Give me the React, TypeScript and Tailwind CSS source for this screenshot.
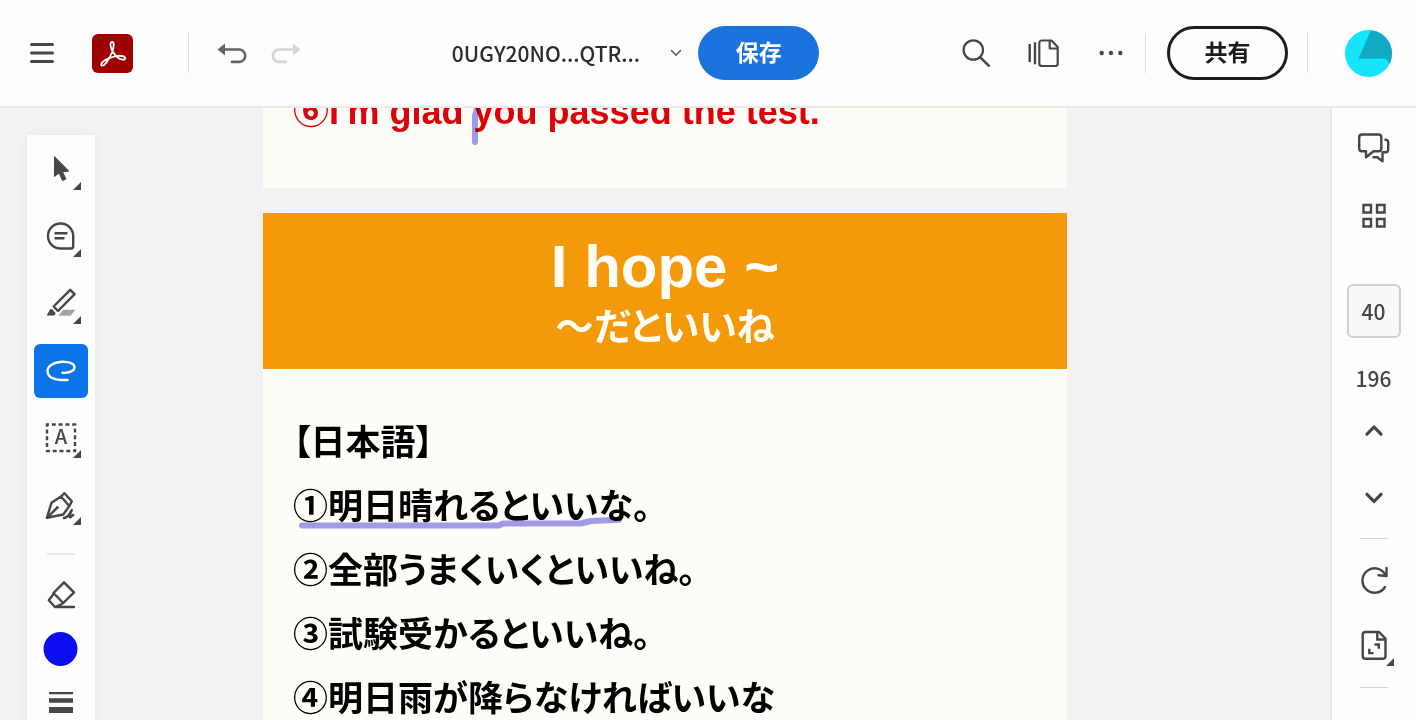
import React from 'react';

const ink = '#464646';

interface ToolButtonProps {
  label: string;
  active?: boolean;
  more?: boolean;
  children: React.ReactNode;
}

const ToolButton: React.FC<ToolButtonProps> = ({ label, active, more, children }) => (
  <button
    type="button"
    aria-label={label}
    className={`relative size-[54px] shrink-0 rounded-md ${active ? 'bg-[#0b75e8] text-white' : 'text-[#464646]'}`}
  >
    <svg
      viewBox="0 0 54 54"
      className="size-full"
      fill="none"
      stroke="currentColor"
      strokeWidth="2.4"
      strokeLinecap="round"
      strokeLinejoin="round"
    >
      {children}
    </svg>
    {more && (
      <svg viewBox="0 0 8 8" className="absolute right-[7px] bottom-[7px] size-2" fill="currentColor">
        <path d="M8 0v8H0z" />
      </svg>
    )}
  </button>
);

const Header: React.FC = () => (
  <header className="flex h-[108px] shrink-0 items-center justify-between border-b-2 border-[#e9e9e9] bg-[#fdfdfd] pr-6 pl-[30px]">
    <div className="flex items-center">
      <button type="button" aria-label="メニュー">
        <svg viewBox="0 0 24 24" className="size-6" stroke={ink} strokeWidth="3" strokeLinecap="round">
          <path d="M1.5 3.5h21M1.5 12h21M1.5 20.5h21" />
        </svg>
      </button>
      <a href="#" aria-label="Acrobat" className="ml-[38px] block h-[39px] w-[41px] rounded-md bg-[#9f0000]">
        <svg viewBox="0 0 122 117" className="size-full" fill="none" stroke="#fff" strokeWidth="5.5">
          <path d="M60 24C52 24 54 40 62 53C70 66 82 76 92 77C102 78 101 66 88 66C72 65 52 71 38 79C26 86 24 95 31 95C40 95 54 68 60 54C65 40 67 24 60 24Z" />
        </svg>
      </a>
      <div className="ml-[55px] h-10 w-px bg-[#dcdcdc]" />
      <button type="button" aria-label="元に戻す" className="ml-7">
        <svg viewBox="0 0 30 24" className="h-6 w-[30px]" fill="none" stroke="#646464" strokeWidth="2.6" strokeLinecap="round">
          <path d="M7 8.500H22a6.200 6.200 0 0 1 0 12.400H15" />
          <path d="M.5 8.500l7.500-6v12z" fill="#646464" stroke="none" />
        </svg>
      </button>
      <button type="button" aria-label="やり直し" className="mr-2 ml-6" disabled>
        <svg viewBox="0 0 30 24" className="h-6 w-[30px]" fill="none" stroke="#d4d4d4" strokeWidth="2.6" strokeLinecap="round">
          <path d="M23 8.500H8a6.200 6.200 0 0 0 0 12.400H15" />
          <path d="M29.500 8.500l-7.500-6v12z" fill="#d4d4d4" stroke="none" />
        </svg>
      </button>
    </div>

    <div className="flex items-center">
      <button type="button" className="flex items-center text-[21px] leading-8 font-medium text-[#2c2c2c]">
        <span>0UGY20NO...QTR...</span>
        <svg viewBox="0 0 12 8" className="ml-[30px] h-2 w-3" fill="none" stroke="#555" strokeWidth="1.6" strokeLinecap="round">
          <path d="M1.500 1.500L6 6.200l4.500-4.700" />
        </svg>
      </button>
      <button
        type="button"
        className="ml-4 h-[54px] w-[121px] rounded-full bg-[#1b73de] pb-1 text-[23px] leading-8 font-bold text-white"
      >
        保存
      </button>
    </div>

    <div className="flex items-center">
      <button type="button" aria-label="検索">
        <svg viewBox="0 0 28 28" className="size-7" fill="none" stroke={ink} strokeWidth="2.2" strokeLinecap="round">
          <circle cx="11.300" cy="11" r="9.700" />
          <path d="M18.300 18.300l8.400 8.400" strokeWidth="2.600" />
        </svg>
      </button>
      <button type="button" aria-label="ページ表示" className="ml-[38px]">
        <svg viewBox="0 0 31 28" className="h-7 w-[31px]" fill="none" stroke={ink} strokeWidth="2.2" strokeLinejoin="round">
          <path d="M1.700 5v18M7 3.300v22" strokeWidth="2.400" />
          <path d="M13.800 1.500H23.500l6.200 6.500V24.500a2.500 2.500 0 0 1-2.500 2.500H13.800a2.500 2.500 0 0 1-2.500-2.500V4a2.500 2.500 0 0 1 2.500-2.500z" />
          <path d="M21.700 1.500V9.500h8" />
        </svg>
      </button>
      <button type="button" aria-label="その他" className="ml-10">
        <svg viewBox="0 0 24 24" className="size-6" fill={ink}>
          <circle cx="2.700" cy="12" r="2.200" />
          <circle cx="12" cy="12" r="2.200" />
          <circle cx="21.300" cy="12" r="2.200" />
        </svg>
      </button>
      <div className="ml-[22px] h-10 w-px bg-[#dcdcdc]" />
      <button
        type="button"
        className="ml-[21px] h-[54px] w-[121px] rounded-full border-3 border-[#1c1c1c] pb-1 text-[23px] leading-8 font-bold text-[#1c1c1c]"
      >
        共有
      </button>
      <div className="ml-[19px] h-10 w-px bg-[#dcdcdc]" />
      <button type="button" aria-label="アカウント" className="ml-[37px] size-[47px] overflow-hidden rounded-full bg-[#16e4fb]">
        <svg viewBox="0 0 47 47" className="size-full" fill="#10abc1">
          <path d="M26 0L13.300 28.700H41L45 34L47 36V0z" />
        </svg>
      </button>
    </div>
  </header>
);

const Toolbar: React.FC = () => (
  <nav aria-label="ツール" className="mt-[27px] ml-[27px] flex w-[68px] flex-col items-center gap-[13px] bg-[#fdfdfd] pt-2 shadow-[0_0_8px_rgba(0,0,0,0.06)]">
    <ToolButton label="選択" more>
      <path
        d="M20.500 14v19.500l4.600-3.600L28.500 37.500l3.400-1.500-3.400-7.300 6-.6z"
        fill="currentColor"
        strokeWidth="1"
      />
    </ToolButton>
    <ToolButton label="コメント" more>
      <path d="M26.500 13.500a12.500 12.500 0 1 0 0 25H37a2.200 2.200 0 0 0 2.200-2.200V26A12.500 12.500 0 0 0 26.500 13.500z" />
      <path d="M21.500 23.300h11M21.500 28.200h8" />
    </ToolButton>
    <ToolButton label="ハイライト" more>
      <path d="M29.300 32.700h12l-4.600 6H24.300z" fill="#a3a3a3" stroke="none" />
      <path d="M36.200 12.800l4.400 4.400L24 34l-4.400-4.500z" />
      <path d="M12.700 38.500L16 32.300h2.500l3.200 4-1.500 2.200z" fill="currentColor" stroke="none" />
    </ToolButton>
    <ToolButton label="手書き" active>
      <path d="M28.500 28.700C34 29.500 40.500 27 40.500 23.500C40.500 19.500 35 17.700 29 17.700C20 17.700 13.500 22 13.500 27C13.500 33 20 36 27 36H33.500" />
    </ToolButton>
    <ToolButton label="テキスト" more>
      <path
        d="M13 13.500h28v26.500H13z"
        strokeDasharray="4 2.800"
        strokeDashoffset="2"
        strokeLinecap="butt"
        strokeLinejoin="miter"
      />
      <text x="27" y="33" textAnchor="middle" fontSize="20" fontWeight="500" fill="currentColor" stroke="none">
        A
      </text>
    </ToolButton>
    <ToolButton label="署名" more>
      <path d="M12.900 39.800L17.500 24.700L27 18.500L35.300 28L29.300 36.500z" />
      <path d="M27 18.500l3.500-3.300 7.300 8.200-2.500 4.600M13 39.800l10-10" />
      <circle cx="23.300" cy="29.500" r="1.500" fill="currentColor" stroke="none" />
      <path d="M30 40c4-.5 5.500-4 7.800-8-1.500 4-3.500 7-1.600 7.200 1.500.1 1.500-2 3-2.200" />
    </ToolButton>
    <div className="mt-2 h-0.5 w-7 bg-[#e6e6e6]" />
    <div className="flex flex-col">
      <ToolButton label="消しゴム">
        <path d="M30 14.300l10 10L29.300 35 19.500 25z" />
        <path d="M19.500 26l-4.700 6.300L21 39l7-3M21 39h19" />
      </ToolButton>
      <ToolButton label="色">
        <circle cx="26.500" cy="27" r="17" fill="#0c0cf0" stroke="none" />
      </ToolButton>
      <ToolButton label="太さ">
        <path d="M15 16h24v2.200H15zM15 22.300h24v4.400H15zM15 31h24v6H15z" fill="currentColor" stroke="none" />
      </ToolButton>
    </div>
  </nav>
);

const sentences = [
  '【日本語】',
  '①明日晴れるといいな。',
  '②全部うまくいくといいね。',
  '③試験受かるといいね。',
  '④明日雨が降らなければいいな',
];

const Pages: React.FC = () => (
  <main className="w-full max-w-[804px] font-['Liberation_Sans','Noto_Sans_CJK_JP',sans-serif] font-bold">
    {/* tail of the previous page */}
    <section className="relative -mt-7 bg-[#fdfcf6] pr-8 pb-11 pl-[30px] text-4xl/16 text-[#dc0208]">
      <p>⑥I'm glad you passed the test.</p>
      <svg viewBox="0 0 8 40" className="absolute top-[26px] left-[208px] h-10 w-2 mix-blend-multiply" fill="none" stroke="#a19df0" strokeWidth="6" strokeLinecap="round">
        <path d="M6 2L4 10V36" />
      </svg>
    </section>

    <section className="mt-[25px] bg-[#fdfcf6]">
      <div className="flex h-[156px] flex-col items-center bg-[#f4990a] pt-5 text-[#fffdf5]">
        <h1 className="text-6xl/17">I hope ~</h1>
        <p className="text-[38px] leading-13 [font-feature-settings:'palt']">～だといいね</p>
      </div>
      <div className="relative pt-[42px] pr-8 pl-[30px] text-[35px] leading-16 text-black">
        {sentences.map((text) => (
          <p key={text} className="whitespace-nowrap [font-feature-settings:'palt']">
            {text}
          </p>
        ))}
        <svg viewBox="0 0 326 12" className="absolute top-[148px] left-9 h-3 w-[326px] mix-blend-multiply" fill="none" stroke="#a19df0" strokeWidth="6" strokeLinecap="round" strokeLinejoin="round">
          <path d="M3 8.500H200L204 6.500H282L292 4L320 2.800" />
        </svg>
      </div>
    </section>
  </main>
);

const SidePanel: React.FC = () => (
  <aside className="flex w-[86px] shrink-0 flex-col items-center gap-3 border-l-2 border-[#e9e9e9] bg-[#fdfdfd] pt-3.5 pr-px text-[#464646]">
    <ToolButton label="コメント一覧">
      <path d="M15 12.500h16.500a2.800 2.800 0 0 1 2.800 2.800v11.200a2.800 2.800 0 0 1-2.800 2.800H26.500l-7.500 6v-6h-4a2.800 2.800 0 0 1-2.800-2.800V15.300a2.800 2.800 0 0 1 2.800-2.800z" />
      <path d="M38.500 17.800c1.800 0 2.700.8 2.700 2.400v7.300c0 1.800-1 2.700-2.700 2.700h-3v9l-5.200-4h-3.800" />
    </ToolButton>
    <ToolButton label="サムネール">
      <path d="M16.500 17h7.500v7.500h-7.500zM30 17h7.500v7.500H30zM16.500 31h7.500v7.500h-7.500zM30 31h7.500v7.500H30z" strokeLinejoin="miter" />
    </ToolButton>
    <input
      type="text"
      aria-label="ページ番号"
      defaultValue="40"
      className="mt-[30px] size-[54px] shrink-0 rounded-md border-2 border-[#d0d0d0] bg-[#f8f8f8] text-center text-[21px] font-medium"
    />
    <span className="mt-3.5 text-[21px] leading-7 font-medium">196</span>
    <ToolButton label="前のページ">
      <path d="M20 30.200l7-7.200 7 7.200" strokeWidth="3.200" />
    </ToolButton>
    <ToolButton label="次のページ">
      <path d="M20 24.300l7 7.200 7-7.200" strokeWidth="3.200" />
    </ToolButton>
    <div className="my-0.5 h-px w-7 shrink-0 bg-[#d4d4d4]" />
    <ToolButton label="回転">
      <path d="M38 34A12.200 12.200 0 1 1 38.500 22" />
      <path d="M39.500 15v8l-8-.8" />
    </ToolButton>
    <ToolButton label="ページに合わせる" more>
      <path d="M18.500 13H32l6.500 6.500V37a2.800 2.800 0 0 1-2.800 2.800H18.500a2.800 2.800 0 0 1-2.800-2.800V15.800a2.800 2.800 0 0 1 2.800-2.800z" />
      <path d="M30.300 13.500v7h8M27.500 25.500h4.300v4.300M22.300 29.800v4.300h4.300" strokeLinecap="butt" strokeLinejoin="miter" />
    </ToolButton>
    <div className="mt-0.5 h-px w-7 shrink-0 bg-[#d4d4d4]" />
  </aside>
);

export default function App() {
  return (
    <div lang="ja" className="flex h-screen flex-col overflow-hidden bg-[#f2f2f2] font-['Noto_Sans_CJK_JP',sans-serif]">
      <Header />
      <div className="flex min-h-0 flex-1 overflow-hidden">
        <div className="flex-1">
          <Toolbar />
        </div>
        <Pages />
        <div className="flex-1" />
        <SidePanel />
      </div>
    </div>
  );
}
